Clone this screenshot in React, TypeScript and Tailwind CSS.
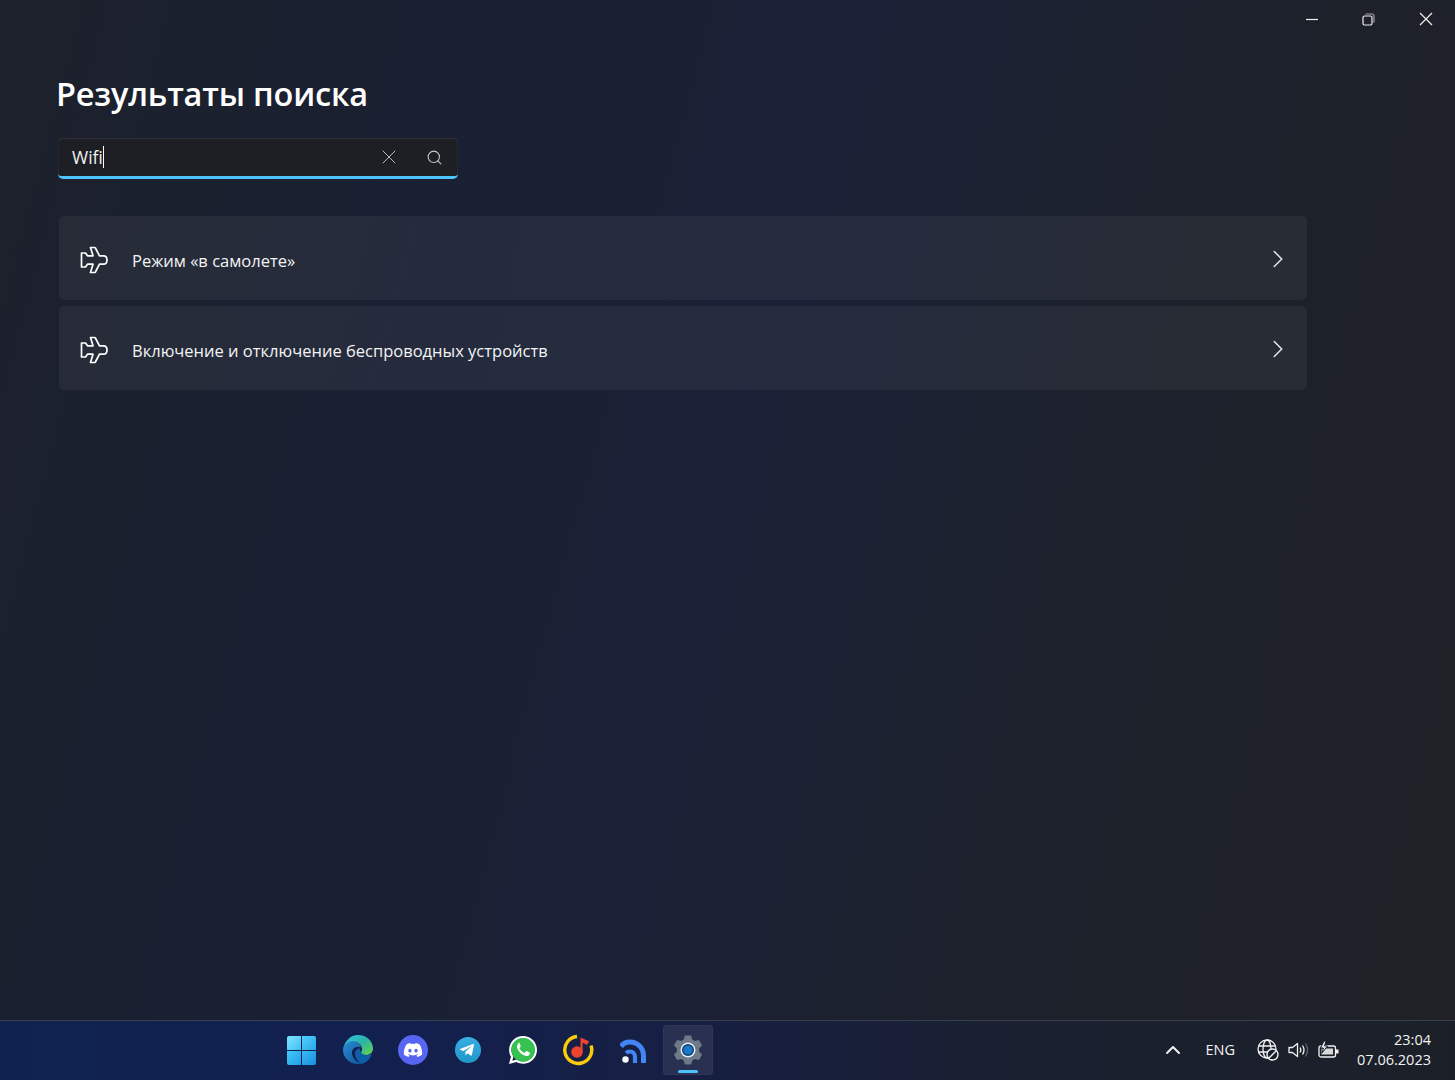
import React from "react";
import { ChevronRight, Search, X, ChevronUp } from "lucide-react";
import { FaDiscord, FaTelegramPlane, FaWhatsapp } from "react-icons/fa";

function Plane() {
  return (
    <svg className="mt-[3px]" width="28" height="28" viewBox="0 0 28 28" fill="none" stroke="#fff" strokeWidth="1.700" strokeLinejoin="round">
      <path d="M10.500 1.500h4c.4 0 .7.200.9.500l4.100 7.800h4c2.500 0 3.500 2.200 3.500 4.200s-1 4.200-3.500 4.200h-4l-4.100 7.800c-.2.300-.5.500-.9.500h-4L13 18.200H7.500L5.500 21h-4V7h4l2 2.800H13z" />
    </svg>
  );
}

function ResultRow({ title }: { title: string }) {
  return (
    <div className="flex h-[84px] items-center rounded-[5px] bg-[#ffffff0d] pl-[21px] pr-[14px]">
      <Plane />
      <span className="ml-[24px] mt-[7px] text-[16.500px] text-[#f4f4f5]">{title}</span>
      <ChevronRight className="ml-auto mt-[2px]" size={30} color="#e8e8e8" strokeWidth={1.200} />
    </div>
  );
}

function WinLogo() {
  return (
    <div className="mr-[3px] grid h-[29px] w-[29px] grid-cols-2 gap-[1px]">
      <div className="rounded-tl-[2px] bg-gradient-to-br from-[#7ee3ff] to-[#3cc0f5]" />
      <div className="rounded-tr-[2px] bg-gradient-to-br from-[#4fd0fb] to-[#28a8ea]" />
      <div className="rounded-bl-[2px] bg-gradient-to-br from-[#44c8f9] to-[#1f9fe6]" />
      <div className="rounded-br-[2px] bg-gradient-to-br from-[#36baf5] to-[#1a8fdd]" />
    </div>
  );
}

function Edge() {
  return (
    <svg width="32" height="32" viewBox="0 0 32 32">
      <defs>
        <linearGradient id="edgeA" x1="0" y1="0" x2="1" y2="1">
          <stop offset="0" stopColor="#35c1f1" />
          <stop offset="0.5" stopColor="#2bb5a5" />
          <stop offset="1" stopColor="#66d34a" />
        </linearGradient>
        <linearGradient id="edgeB" x1="0" y1="0" x2="1" y2="1">
          <stop offset="0" stopColor="#2a8fd8" />
          <stop offset="1" stopColor="#0c4f92" />
        </linearGradient>
      </defs>
      <path d="M16 1c8.500 0 15 6 15 13.500 0 4-3 6.500-7 6.500-3 0-5-1-5-2.500 0-.8 1-1.200 1-3.500 0-4-3.500-7-8-7-5 0-10 4-11 8C2.500 7 8.500 1 16 1z" fill="url(#edgeA)" />
      <path d="M1 16c0-4.500 5-9 10-9 4.500 0 8 3 8 6.500-4.500-1.500-9 .5-9 5 0 5 4 10.500 11.500 11-1.700.6-3.500.500-5.500.500C8 30 1 24 1 16z" fill="url(#edgeB)" />
      <path d="M13 19c0-2.500 2-4.500 5-4.500-.2 2 .6 4 2.500 5.500 3 1.800 6.500 1.500 9.500-.5-2 5.500-5 9-9.500 10C16 28.500 13 24 13 19z" fill="#0e5ea8" />
    </svg>
  );
}

function Discord() {
  return (
    <div className="flex h-[30px] w-[30px] items-center justify-center rounded-full bg-[#5865f2]">
      <FaDiscord size={20} color="#fff" />
    </div>
  );
}

function Telegram() {
  return (
    <div className="flex h-[26px] w-[26px] items-center justify-center rounded-full bg-gradient-to-b from-[#37aee2] to-[#1e96c8]">
      <FaTelegramPlane size={16} color="#fff" className="-ml-[2px]" />
    </div>
  );
}

function Whatsapp() {
  return (
    <div className="relative flex h-[30px] w-[30px] items-center justify-center">
      <FaWhatsapp size={32} color="#fff" className="absolute" />
      <svg width="32" height="32" viewBox="0 0 32 32" className="absolute">
        <circle cx="16.200" cy="15.800" r="11.800" fill="#35c24f" />
        <path d="M11.500 9.500c-1.500 1.200-2 3-1 5.300 1.300 3 3.800 5.500 6.800 6.700 2.300.9 4.200.4 5.200-1.100.5-.8.500-1.500.2-1.800l-2.800-1.400c-.4-.2-.7 0-1 .3l-.9 1.100c-.3.300-.5.300-.9.100-2-.9-3.500-2.300-4.500-4.300-.2-.4 0-.6.200-.8l.7-.9c.3-.3.3-.6.100-1l-1.100-2.600c-.3-.6-.6-.6-1-.6z" fill="#fff" />
      </svg>
    </div>
  );
}

function Music() {
  return (
    <svg width="32" height="32" viewBox="0 0 32 32" fill="none">
      <path d="M29 11.500A13.500 13.500 0 1 1 15 2.500" stroke="#fccc0a" strokeWidth="3.400" />
      <circle cx="15" cy="18" r="5.800" fill="#f0432e" />
      <path d="M18.500 18V3.500l8.500 3.800-1.800 3.700-4.600-2.200V18z" fill="#f0432e" />
    </svg>
  );
}

function Feed() {
  return (
    <svg width="26" height="28" viewBox="0 0 26 28" fill="none">
      <path d="M1 10.500c2-3 5.500-4.500 9-4.500 7.500 0 13.500 6 13.500 13.500V27" stroke="#4285f4" strokeWidth="5" />
      <path d="M6 17c1-1 2.500-1.500 4-1.500 3 0 5 2.500 5 5.500v6" stroke="#4285f4" strokeWidth="4.200" />
      <circle cx="5.500" cy="23.500" r="3.200" fill="#fff" />
    </svg>
  );
}

function Gear() {
  return (
    <svg width="32" height="32" viewBox="0 0 32 32">
      <path
        d="M12.800 1.500h6.400l1 4 2.700 1.500 4-1.100 3.200 5.500-3 2.900v3.400l3 2.900-3.200 5.500-4-1.100-2.700 1.500-1 4h-6.400l-1-4-2.700-1.500-4 1.100-3.200-5.500 3-2.900v-3.400l-3-2.900 3.200-5.500 4 1.100 2.700-1.500z"
        fill="#6d7a8a"
      />
      <circle cx="16" cy="16" r="7.500" fill="#e6eef5" />
      <circle cx="16" cy="16" r="6" fill="#0f3d6e" />
      <circle cx="16" cy="16" r="4.600" fill="#1a78c9" />
    </svg>
  );
}

function AppIcon({ children, active }: { children: React.ReactNode; active?: boolean }) {
  return (
    <div className={active ? "relative flex h-[50px] w-[50px] items-center justify-center rounded-[4px] border border-[#ffffff0a] bg-[#ffffff14]" : "flex h-[50px] w-[50px] items-center justify-center"}>
      {children}
      {active && <div className="absolute bottom-[1px] left-[14px] h-[3px] w-[20px] rounded-full bg-[#4cc2ff]" />}
    </div>
  );
}

function TrayGlobe() {
  return (
    <svg width="22" height="22" viewBox="0 0 22 22" fill="none" stroke="#f2f2f2" strokeWidth="1.300">
      <circle cx="10" cy="10" r="9" />
      <ellipse cx="10" cy="10" rx="4" ry="9" />
      <path d="M1.500 7h17M1.500 13h10" />
      <circle cx="15.500" cy="15.500" r="5.500" fill="#1a2029" strokeWidth="1.400" />
      <path d="M12 19l7-7" strokeWidth="1.400" />
    </svg>
  );
}

function TraySpeaker() {
  return (
    <svg width="21" height="18" viewBox="0 0 21 18" fill="none" stroke="#f2f2f2" strokeWidth="1.300" strokeLinejoin="round">
      <path d="M1 6.500v5h3.500l5 4V2.500l-5 4z" />
      <path d="M12 6.500c1 1.500 1 3.500 0 5M14.500 4.500c1.800 2.700 1.800 6.300 0 9" />
      <path d="M17.500 2.500c2.600 4 2.600 9 0 13" stroke="#63666b" />
    </svg>
  );
}

function TrayBattery() {
  return (
    <svg width="21" height="18" viewBox="0 0 21 18" fill="none">
      <rect x="1" y="5" width="16.500" height="11" rx="2" stroke="#f2f2f2" strokeWidth="1.300" />
      <rect x="3.500" y="7.500" width="11.500" height="6" fill="#d8d8d8" />
      <rect x="18" y="8.500" width="2.500" height="4" fill="#f2f2f2" />
      <path d="M6 0 2.500 7h3l-1.500 5 5.500-7H6.500L8 0z" fill="#f2f2f2" stroke="#1a2029" strokeWidth="1" />
    </svg>
  );
}

export default function App() {
  return (
    <div
      className="flex h-[1080px] w-[1455px] flex-col overflow-hidden bg-[linear-gradient(105deg,#1c212b_0%,#1a2033_30%,#1a2136_50%,#1d212b_72%,#1f2126_100%)] text-white"
      style={{ fontFamily: '"Open Sans", "Noto Sans", sans-serif' }}
    >
      <main className="flex h-[1020px] flex-col">
        <div className="flex h-[38px] justify-end pr-[1px]">
          <div className="flex w-[57px] items-center justify-center">
            <svg width="14" height="14" viewBox="0 0 14 14" stroke="#f0f0f0" strokeWidth="1.200"><path d="M1 7.500h12" /></svg>
          </div>
          <div className="flex w-[57px] items-center justify-center">
            <svg width="13" height="13" viewBox="0 0 13 13" fill="none" stroke="#f0f0f0" strokeWidth="1.200">
              <rect x="1" y="3" width="9" height="9" rx="1.500" />
              <path d="M3.500 1h6.500a2 2 0 0 1 2 2v6.500" stroke="#a0a0a0" />
            </svg>
          </div>
          <div className="flex w-[57px] items-center justify-center">
            <svg width="14" height="14" viewBox="0 0 14 14" stroke="#f0f0f0" strokeWidth="1.200"><path d="M1 1l12 12M13 1L1 13" /></svg>
          </div>
        </div>
        <div className="pl-[57px] pr-[148px]">
          <h1 className="-ml-[1px] mt-[33px] text-[32.500px] font-semibold leading-[46px] tracking-[-0.2px]">Результаты поиска</h1>
          <div className="ml-[1px] mt-[21px] flex h-[41px] w-[400px] items-center overflow-hidden rounded-[5px] border-b-[3px] border-b-[#4cc2ff] bg-[#1e1f25] pl-[14px] pr-[15px] shadow-[inset_0_1px_0_#ffffff14,inset_1px_0_0_#ffffff0a,inset_-1px_0_0_#ffffff0a]">
            <span className="text-[17.500px] text-[#f2f2f2]">Wifi</span>
            <span className="h-[22px] w-[1px] bg-white" />
            <X className="ml-auto" size={24} color="#c9c9c9" strokeWidth={0.900} />
            <Search className="ml-[25px]" size={17} color="#c9c9c9" strokeWidth={1.500} />
          </div>
          <div className="ml-[2px] mt-[37px] flex flex-col gap-[6px]">
            <ResultRow title="Режим «в самолете»" />
            <ResultRow title="Включение и отключение беспроводных устройств" />
          </div>
        </div>
      </main>
      <footer className="relative flex h-[60px] items-center border-t border-t-[#3b4050] bg-[linear-gradient(90deg,#10234f_0%,#12204f_25%,#171f42_48%,#1a2030_70%,#1b2028_100%)] pb-[1px] pl-[278px] pr-[24px]">
        <div className="flex items-center gap-[5px]">
          <AppIcon><WinLogo /></AppIcon>
          <AppIcon><Edge /></AppIcon>
          <AppIcon><Discord /></AppIcon>
          <AppIcon><Telegram /></AppIcon>
          <AppIcon><Whatsapp /></AppIcon>
          <AppIcon><Music /></AppIcon>
          <AppIcon><Feed /></AppIcon>
          <AppIcon active><Gear /></AppIcon>
        </div>
        <div className="ml-auto flex items-center">
          <ChevronUp size={24} color="#f2f2f2" strokeWidth={2} />
          <span className="ml-[21px] text-[14.500px] text-[#f2f2f2]">ENG</span>
          <div className="ml-[22px] flex items-center gap-[9px]">
            <TrayGlobe />
            <TraySpeaker />
            <TrayBattery />
          </div>
          <div className="ml-[18px] flex flex-col items-end text-[14.500px] leading-[20px] text-[#f2f2f2]">
            <span>23:04</span>
            <span>07.06.2023</span>
          </div>
        </div>
      </footer>
    </div>
  );
}
